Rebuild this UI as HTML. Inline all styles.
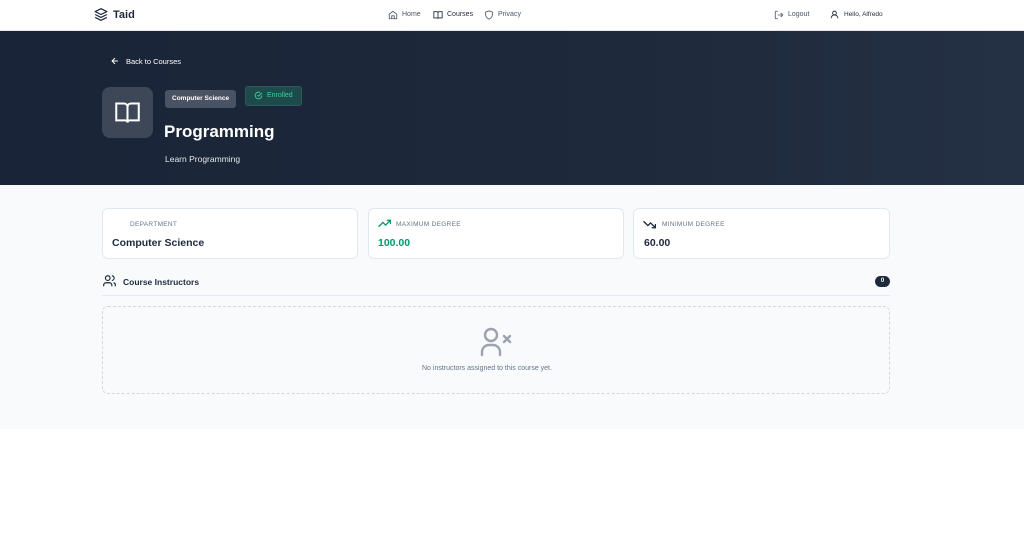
<!DOCTYPE html>
<html><head><meta charset="utf-8"><style>
*{margin:0;padding:0;box-sizing:border-box}
body{width:1024px;height:558px;background:#fff;font-family:"Liberation Sans",sans-serif;color:#1e293b;position:relative;overflow:hidden}
.abs{position:absolute}
svg{display:block}
.nav{height:31px;border-bottom:1px solid #e5e7eb;background:#fff}
.hero{top:31px;left:0;width:1024px;height:154px;background:linear-gradient(90deg,#1a2438,#1e293b 60%,#243044)}
.main{top:185px;left:0;width:1024px;height:244px;background:#f8fafc}
.card{background:#fff;border:1px solid #e2e8f0;border-radius:6px;height:51px;top:208px}
.lbl{font-size:6.5px;color:#64748b;letter-spacing:.3px}
.val{font-size:10.5px;font-weight:bold}
.nt{font-size:7px;line-height:10px;top:10px}
</style></head><body>
<div class="abs nav" style="left:0;top:0;width:1024px"></div>
<svg class="abs" style="left:94px;top:7px" width="14" height="15" viewBox="0 0 24 24" fill="none" stroke="#1e293b" stroke-width="2" stroke-linejoin="round"><path d="M12 2 2 7l10 5 10-5-10-5z"/><path d="m2 12 10 5 10-5"/><path d="m2 17 10 5 10-5"/></svg>
<div class="abs" style="left:113px;top:9px;font-size:11px;font-weight:bold">Taid</div>
<svg class="abs" style="left:388px;top:10px" width="10" height="10" viewBox="0 0 24 24" fill="none" stroke="#475569" stroke-width="2"><path d="M3 10 12 3l9 7v11H3z"/><path d="M9 21v-7h6v7"/></svg>
<div class="abs nt" style="left:402px;color:#475569">Home</div>
<svg class="abs" style="left:433px;top:10px" width="10" height="10" viewBox="0 0 24 24" fill="none" stroke="#1e293b" stroke-width="2"><path d="M2 4h7a3 3 0 0 1 3 3v14a2 2 0 0 0-2-2H2zM22 4h-7a3 3 0 0 0-3 3v14a2 2 0 0 1 2-2h8z"/></svg>
<div class="abs nt" style="left:447px;color:#1e293b">Courses</div>
<svg class="abs" style="left:484px;top:10px" width="10" height="10" viewBox="0 0 24 24" fill="none" stroke="#475569" stroke-width="2"><path d="M12 22s8-4 8-10V5l-8-3-8 3v7c0 6 8 10 8 10z"/></svg>
<div class="abs nt" style="left:498px;color:#475569">Privacy</div>
<svg class="abs" style="left:774px;top:10px" width="10" height="10" viewBox="0 0 24 24" fill="none" stroke="#475569" stroke-width="2"><path d="M9 21H5a2 2 0 0 1-2-2V5a2 2 0 0 1 2-2h4M16 17l5-5-5-5M21 12H9"/></svg>
<div class="abs nt" style="left:788px;color:#475569">Logout</div>
<svg class="abs" style="left:830px;top:10px" width="9" height="9" viewBox="0 0 24 24" fill="none" stroke="#1e293b" stroke-width="2.4"><circle cx="12" cy="8" r="5"/><path d="M3 22a9 9 0 0 1 18 0"/></svg>
<div class="abs" style="left:844px;top:10px;line-height:10px;font-size:6.5px;color:#1e293b">Hello, Alfredo</div>

<div class="abs hero"></div>
<svg class="abs" style="left:110px;top:56px" width="10" height="10" viewBox="0 0 24 24" fill="none" stroke="#fff" stroke-width="2.4"><path d="M19 12H5M12 19l-7-7 7-7"/></svg>
<div class="abs" style="left:126px;top:57px;font-size:7.5px;color:#fff">Back to Courses</div>
<div class="abs" style="left:102px;top:87px;width:51px;height:51px;border-radius:8px;background:#3d4758"></div>
<svg class="abs" style="left:114px;top:99px" width="27" height="27" viewBox="0 0 24 24" fill="none" stroke="#fff" stroke-width="1.8"><path d="M2 4h7a3 3 0 0 1 3 3v14a2 2 0 0 0-2-2H2zM22 4h-7a3 3 0 0 0-3 3v14a2 2 0 0 1 2-2h8z"/></svg>
<div class="abs" style="left:165px;top:90px;height:18px;padding:0 7px;line-height:18px;border-radius:3px;background:#4a5363;font-size:6.5px;color:#fff;font-weight:bold">Computer Science</div>
<div class="abs" style="left:245px;top:86px;width:57px;height:20px;border-radius:3px;background:#1f4a4c;border:1px solid #2b5a5a"></div>
<svg class="abs" style="left:254px;top:91px" width="9" height="9" viewBox="0 0 24 24" fill="none" stroke="#34d399" stroke-width="2.4"><path d="M21 12a9 9 0 1 1-5-8"/><path d="m9 11 3 3 9-9"/></svg>
<div class="abs" style="left:267px;top:91px;line-height:10px;font-size:7px;color:#34d399">Enrolled</div>
<div class="abs" style="left:164px;top:122px;font-size:17px;font-weight:bold;color:#fff">Programming</div>
<div class="abs" style="left:165px;top:154px;font-size:8.5px;color:#e2e8f0">Learn Programming</div>

<div class="abs main"></div>
<div class="abs card" style="left:102px;width:256px"></div>
<div class="abs card" style="left:368px;width:256px"></div>
<div class="abs card" style="left:633px;width:257px"></div>
<div class="abs lbl" style="left:130px;top:221px">DEPARTMENT</div>
<div class="abs val" style="left:112px;top:237px">Computer Science</div>
<svg class="abs" style="left:378px;top:219px" width="13" height="9" viewBox="0 0 24 16" fill="none" stroke="#059669" stroke-width="2.4"><path d="M1 14l8-8 5 5 9-9M16 2h7v7"/></svg>
<div class="abs lbl" style="left:396px;top:221px">MAXIMUM DEGREE</div>
<div class="abs val" style="left:378px;top:237px;color:#059669">100.00</div>
<svg class="abs" style="left:643px;top:220px" width="13" height="9" viewBox="0 0 24 16" fill="none" stroke="#1e293b" stroke-width="2.4"><path d="M1 2l8 8 5-5 9 9M16 14h7V7"/></svg>
<div class="abs lbl" style="left:662px;top:221px">MINIMUM DEGREE</div>
<div class="abs val" style="left:644px;top:237px">60.00</div>

<svg class="abs" style="left:102px;top:274px" width="15" height="14" viewBox="0 0 24 24" fill="none" stroke="#1e293b" stroke-width="2"><circle cx="9" cy="7" r="4"/><path d="M2 21v-2a4 4 0 0 1 4-4h6a4 4 0 0 1 4 4v2M16 3a4 4 0 0 1 0 8M22 21v-2a4 4 0 0 0-3-4"/></svg>
<div class="abs" style="left:123px;top:277px;font-size:8.5px;font-weight:bold">Course Instructors</div>
<div class="abs" style="left:875px;top:276px;width:15px;height:11px;border-radius:6px;background:#1e293b;color:#fff;font-size:6px;font-weight:bold;text-align:center;line-height:11px;display:flex;align-items:center;justify-content:center">0</div>
<div class="abs" style="left:102px;top:295px;width:788px;height:1px;background:#e2e8f0"></div>
<div class="abs" style="left:102px;top:306px;width:788px;height:88px;border:1px dashed #d4d8de;border-radius:6px"></div>
<svg class="abs" style="left:479px;top:327px" width="34" height="30" viewBox="0 0 34 30" fill="none" stroke="#9ca3af" stroke-width="2.4" stroke-linecap="round"><circle cx="12" cy="8" r="6"/><path d="M3 28v-3a7 7 0 0 1 7-7h4a7 7 0 0 1 7 7v3"/><path d="M25 9l6 6M31 9l-6 6"/></svg>
<div class="abs" style="left:422px;top:365px;font-size:7px;color:#64748b">No instructors assigned to this course yet.</div>
</body></html>
